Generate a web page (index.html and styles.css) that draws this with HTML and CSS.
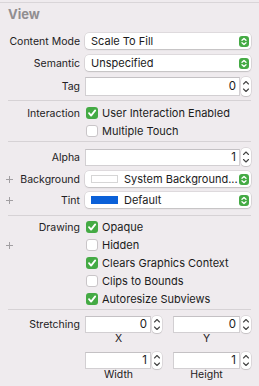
FILE: index.html
```html
<!DOCTYPE html>
<html>
<head>
<meta charset="utf-8">
<link rel="stylesheet" href="styles.css">
</head>
<body>
<div class="panel">
  <div class="topline"></div>
  <div class="title">View</div>
  <div class="section s1">
    <div class="row r22"><div class="label">Content Mode</div>
      <div class="popup"><span class="ptext">Scale To Fill</span><span class="pbtn"><svg width="10" height="11" viewBox="0 0 10 11"><path d="M3 4.2 L5 2.4 L7 4.2 M3 6.8 L5 8.6 L7 6.8" fill="none" stroke="#fff" stroke-width="1.3" stroke-linecap="round" stroke-linejoin="round"/></svg></span></div></div>
    <div class="row r22"><div class="label">Semantic</div>
      <div class="popup"><span class="ptext">Unspecified</span><span class="pbtn"><svg width="10" height="11" viewBox="0 0 10 11"><path d="M3 4.2 L5 2.4 L7 4.2 M3 6.8 L5 8.6 L7 6.8" fill="none" stroke="#fff" stroke-width="1.3" stroke-linecap="round" stroke-linejoin="round"/></svg></span></div></div>
    <div class="row r24"><div class="label">Tag</div>
      <div class="numfield wide"><div class="field">0</div><div class="stepper"><svg width="10" height="19" viewBox="0 0 10 19"><path d="M2.5 7 L5 4.5 L7.5 7 M2.5 12 L5 14.5 L7.5 12" fill="none" stroke="#444" stroke-width="1.1" stroke-linecap="round" stroke-linejoin="round"/></svg></div></div></div>
  </div>
  <div class="sep"></div>
  <div class="section s2">
    <div class="row r18"><div class="label">Interaction</div>
      <div class="check"><span class="box on"><svg width="12" height="12" viewBox="0 0 12 12"><path d="M3 6.2 L5.1 8.6 L9.2 3.4" fill="none" stroke="#fff" stroke-width="1.8" stroke-linecap="round" stroke-linejoin="round"/></svg></span>User Interaction Enabled</div></div>
    <div class="row r18"><div class="label"></div>
      <div class="check"><span class="box"></span>Multiple Touch</div></div>
  </div>
  <div class="sep"></div>
  <div class="section s3">
    <div class="row r22"><div class="label">Alpha</div>
      <div class="numfield wide"><div class="field short">1</div><div class="stepper short"><svg width="10" height="18" viewBox="0 0 10 18"><path d="M2.5 6.5 L5 4 L7.5 6.5 M2.5 11.5 L5 14 L7.5 11.5" fill="none" stroke="#444" stroke-width="1.1" stroke-linecap="round" stroke-linejoin="round"/></svg></div></div></div>
    <div class="row r22"><div class="label"><span class="plus"><svg width="7" height="7" viewBox="0 0 7 7"><path d="M3.5 0 V7 M0 3.5 H7" stroke="#a29fa2" stroke-width="1"/></svg></span>Background</div>
      <div class="popup"><span class="swatch white"></span><span class="ptext">System Background...</span><span class="pbtn"><svg width="10" height="11" viewBox="0 0 10 11"><path d="M3 4.2 L5 2.4 L7 4.2 M3 6.8 L5 8.6 L7 6.8" fill="none" stroke="#fff" stroke-width="1.3" stroke-linecap="round" stroke-linejoin="round"/></svg></span></div></div>
    <div class="row r20"><div class="label"><span class="plus"><svg width="7" height="7" viewBox="0 0 7 7"><path d="M3.5 0 V7 M0 3.5 H7" stroke="#a29fa2" stroke-width="1"/></svg></span>Tint</div>
      <div class="popup"><span class="swatch blue"></span><span class="ptext">Default</span><span class="pbtn"><svg width="10" height="11" viewBox="0 0 10 11"><path d="M3 4.2 L5 2.4 L7 4.2 M3 6.8 L5 8.6 L7 6.8" fill="none" stroke="#fff" stroke-width="1.3" stroke-linecap="round" stroke-linejoin="round"/></svg></span></div></div>
  </div>
  <div class="sep"></div>
  <div class="section s4">
    <div class="row r18"><div class="label">Drawing</div>
      <div class="check"><span class="box on"><svg width="12" height="12" viewBox="0 0 12 12"><path d="M3 6.2 L5.1 8.6 L9.2 3.4" fill="none" stroke="#fff" stroke-width="1.8" stroke-linecap="round" stroke-linejoin="round"/></svg></span>Opaque</div></div>
    <div class="row r18"><div class="label"><span class="plus"><svg width="7" height="7" viewBox="0 0 7 7"><path d="M3.5 0 V7 M0 3.5 H7" stroke="#a29fa2" stroke-width="1"/></svg></span></div>
      <div class="check"><span class="box"></span>Hidden</div></div>
    <div class="row r18"><div class="label"></div>
      <div class="check"><span class="box on"><svg width="12" height="12" viewBox="0 0 12 12"><path d="M3 6.2 L5.1 8.6 L9.2 3.4" fill="none" stroke="#fff" stroke-width="1.8" stroke-linecap="round" stroke-linejoin="round"/></svg></span>Clears Graphics Context</div></div>
    <div class="row r18"><div class="label"></div>
      <div class="check"><span class="box"></span>Clips to Bounds</div></div>
    <div class="row r18"><div class="label"></div>
      <div class="check"><span class="box on"><svg width="12" height="12" viewBox="0 0 12 12"><path d="M3 6.2 L5.1 8.6 L9.2 3.4" fill="none" stroke="#fff" stroke-width="1.8" stroke-linecap="round" stroke-linejoin="round"/></svg></span>Autoresize Subviews</div></div>
  </div>
  <div class="sep"></div>
  <div class="section s5">
    <div class="stretch">
      <div class="label slabel">Stretching</div>
      <div class="pair">
        <div class="cell">
          <div class="numfield"><div class="field short">0</div><div class="stepper short"><svg width="10" height="17" viewBox="0 0 10 17"><path d="M2.5 6 L5 3.5 L7.5 6 M2.5 11 L5 13.5 L7.5 11" fill="none" stroke="#444" stroke-width="1.1" stroke-linecap="round" stroke-linejoin="round"/></svg></div></div>
          <div class="cap">X</div>
        </div>
        <div class="cell">
          <div class="numfield"><div class="field short">0</div><div class="stepper short"><svg width="10" height="17" viewBox="0 0 10 17"><path d="M2.5 6 L5 3.5 L7.5 6 M2.5 11 L5 13.5 L7.5 11" fill="none" stroke="#444" stroke-width="1.1" stroke-linecap="round" stroke-linejoin="round"/></svg></div></div>
          <div class="cap">Y</div>
        </div>
        <div class="cell">
          <div class="numfield"><div class="field short">1</div><div class="stepper short"><svg width="10" height="17" viewBox="0 0 10 17"><path d="M2.5 6 L5 3.5 L7.5 6 M2.5 11 L5 13.5 L7.5 11" fill="none" stroke="#444" stroke-width="1.1" stroke-linecap="round" stroke-linejoin="round"/></svg></div></div>
          <div class="cap">Width</div>
        </div>
        <div class="cell">
          <div class="numfield"><div class="field short">1</div><div class="stepper short"><svg width="10" height="17" viewBox="0 0 10 17"><path d="M2.5 6 L5 3.5 L7.5 6 M2.5 11 L5 13.5 L7.5 11" fill="none" stroke="#444" stroke-width="1.1" stroke-linecap="round" stroke-linejoin="round"/></svg></div></div>
          <div class="cap">Height</div>
        </div>
      </div>
    </div>
  </div>
</div>
</body>
</html>
```
FILE: styles.css
```css
html, body {
  margin: 0;
  padding: 0;
  background: #efebee;
}
body {
  font-family: "Inter", "Liberation Sans", sans-serif;
  font-size: 10.5px;
  color: #232123;
  width: 259px;
  height: 386px;
  overflow: hidden;
}
.panel {
  padding-top: 2px;
}
.topline {
  height: 1px;
  background: #d9d5d8;
}
.title {
  height: 27px;
  line-height: 23px;
  padding-left: 8px;
  font-size: 13px;
  font-weight: 700;
  color: #918e91;
}
.sep {
  height: 1px;
  margin: 0 8px;
  background: #d6d2d5;
}
.section {
  display: flex;
  flex-direction: column;
}
.s1 { padding-bottom: 2px; }
.s2 { padding-top: 3px; padding-bottom: 1px; }
.s3 { padding-top: 4px; padding-bottom: 5px; }
.s4 { padding-top: 2px; padding-bottom: 1px; }
.s5 { padding-top: 6px; }
.row {
  display: grid;
  grid-template-columns: 80px 1fr;
  column-gap: 5px;
  align-items: center;
  padding-right: 8px;
}
.r18 { height: 18px; }
.r20 { height: 20px; }
.r22 { height: 22px; }
.r24 { height: 24px; }
.label {
  display: flex;
  justify-content: flex-end;
  align-items: center;
  white-space: nowrap;
}
.plus {
  margin-right: auto;
  padding-left: 6px;
  display: flex;
}
.popup {
  height: 16px;
  background: #fff;
  border-radius: 4px;
  box-shadow: 0 0 0 0.5px rgba(0, 0, 0, 0.14), 0 1px 1.5px rgba(0, 0, 0, 0.12);
  display: flex;
  align-items: center;
  padding-left: 6px;
  padding-right: 2px;
  color: #1b1b1b;
  font-size: 11px;
}
.ptext {
  flex: 1;
  white-space: nowrap;
  overflow: hidden;
}
.pbtn {
  width: 10px;
  height: 11px;
  background: #44aa44;
  border-radius: 3px;
  display: flex;
}
.swatch {
  width: 27px;
  height: 8px;
  margin-right: 6px;
  box-sizing: border-box;
}
.swatch.white {
  background: #fff;
  border: 1px solid #d6d6d6;
}
.swatch.blue {
  background: #0a60d8;
}
.numfield {
  display: flex;
  align-items: center;
  gap: 1px;
}
.field {
  flex: 1;
  height: 19px;
  box-sizing: border-box;
  background: #fff;
  border: 1px solid #d2cfd2;
  border-top-color: #c4c1c4;
  text-align: right;
  padding-right: 3px;
  line-height: 17px;
  color: #1b1b1b;
  font-size: 11.5px;
}
.field.short {
  height: 17px;
  line-height: 15px;
}
.stepper {
  width: 10px;
  height: 19px;
  background: #fff;
  border-radius: 4px;
  box-shadow: 0 0 0 0.5px rgba(0, 0, 0, 0.15), 0 1px 1px rgba(0, 0, 0, 0.1);
  display: flex;
}
.stepper.short {
  height: 17px;
}
.wide .stepper.short {
  height: 18px;
}
.check {
  display: flex;
  align-items: center;
  white-space: nowrap;
  color: #1b1b1b;
  font-size: 11px;
}
.box {
  width: 12px;
  height: 12px;
  box-sizing: border-box;
  margin-left: 1px;
  margin-right: 4px;
  border-radius: 3px;
  background: #fff;
  border: 1px solid #c9c5c8;
  display: flex;
}
.box.on {
  background: #44aa44;
  border: none;
}
.stretch {
  display: grid;
  grid-template-columns: 80px 1fr;
  column-gap: 5px;
  padding-right: 8px;
  align-items: start;
}
.slabel {
  height: 17px;
}
.pair {
  display: grid;
  grid-template-columns: 77px 78px;
  column-gap: 11px;
  row-gap: 8px;
}
.cell {
  display: flex;
  flex-direction: column;
}
.cap {
  width: 67px;
  text-align: center;
  height: 11px;
  line-height: 11px;
  margin-top: 0;
}
```
